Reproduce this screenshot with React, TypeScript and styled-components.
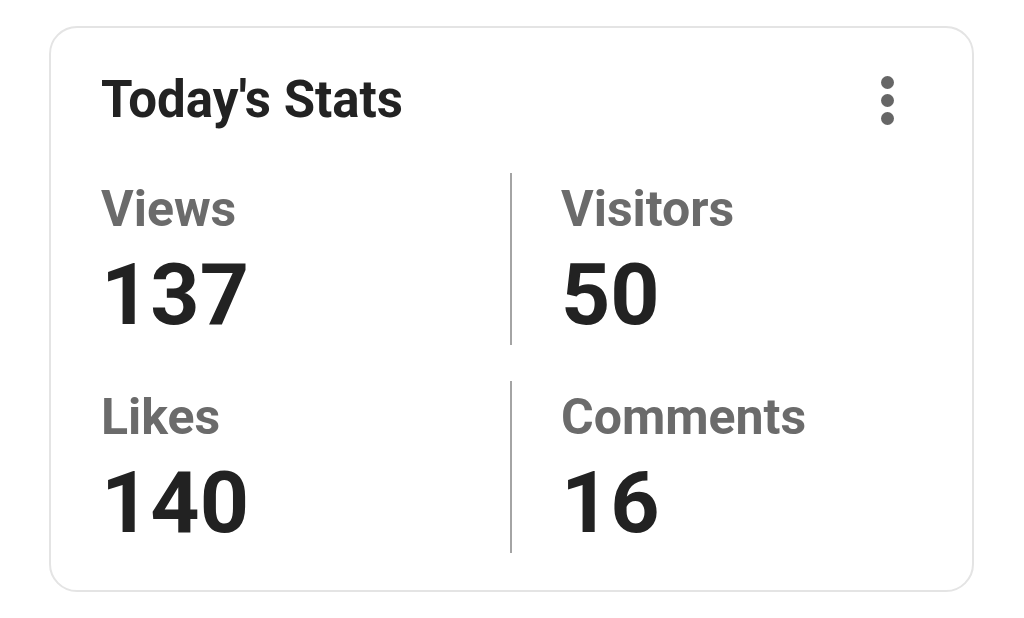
import styled, { createGlobalStyle } from "styled-components";

const GlobalStyle = createGlobalStyle`
  html, body {
    margin: 0;
    padding: 0;
    background: #ffffff;
  }
  body {
    font-family: Roboto, "Liberation Sans", sans-serif;
  }
`;

interface Stat {
  label: string;
  value: number;
}

const stats: Stat[] = [
  { label: "Views", value: 137 },
  { label: "Visitors", value: 50 },
  { label: "Likes", value: 140 },
  { label: "Comments", value: 16 }
];

export default function App() {
  return (
    <>
      <GlobalStyle />
      <Page>
        <Card>
          <Header>
            <Title>Today's Stats</Title>
            <MenuButton aria-label="More options">
              <Dot />
              <Dot />
              <Dot />
            </MenuButton>
          </Header>
          <StatGrid>
            {stats.map((stat, i) => (
              <StatCell key={stat.label} $divided={i % 2 === 1}>
                <Label>{stat.label}</Label>
                <Value>{stat.value}</Value>
              </StatCell>
            ))}
          </StatGrid>
        </Card>
      </Page>
    </>
  );
}

const Page = styled.div`
  padding: 26px 50px 0 49px;
`;

const Card = styled.div`
  box-sizing: border-box;
  width: 925px;
  height: 566px;
  border: 2px solid #e4e4e4;
  border-radius: 28px;
  background: #ffffff;
  padding: 42px 50px 0 50px;
`;

const Header = styled.div`
  display: flex;
  align-items: center;
  justify-content: space-between;
`;

const Title = styled.h2`
  margin: 0;
  font-size: 51px;
  line-height: 60px;
  font-weight: 700;
  color: #222222;
`;

const MenuButton = styled.div`
  display: flex;
  flex-direction: column;
  align-items: center;
  gap: 5px;
  margin-right: 28px;
  margin-top: 0;
`;

const Dot = styled.span`
  width: 13px;
  height: 13px;
  border-radius: 50%;
  background: #666666;
`;

const StatGrid = styled.div`
  display: grid;
  grid-template-columns: 409px 1fr;
  row-gap: 36px;
  margin-top: 43px;
`;

const StatCell = styled.div<{ $divided: boolean }>`
  height: 172px;
  box-sizing: border-box;
  padding-top: 8px;
  padding-left: ${(p) => (p.$divided ? "49px" : "0")};
  border-left: ${(p) => (p.$divided ? "2px solid #a4a4a4" : "none")};
`;

const Label = styled.div`
  font-size: 50px;
  line-height: 56px;
  font-weight: 700;
  color: #6b6b6b;
`;

const Value = styled.div`
  margin-top: 10px;
  font-size: 86px;
  line-height: 96px;
  font-weight: 700;
  color: #222222;
`;
